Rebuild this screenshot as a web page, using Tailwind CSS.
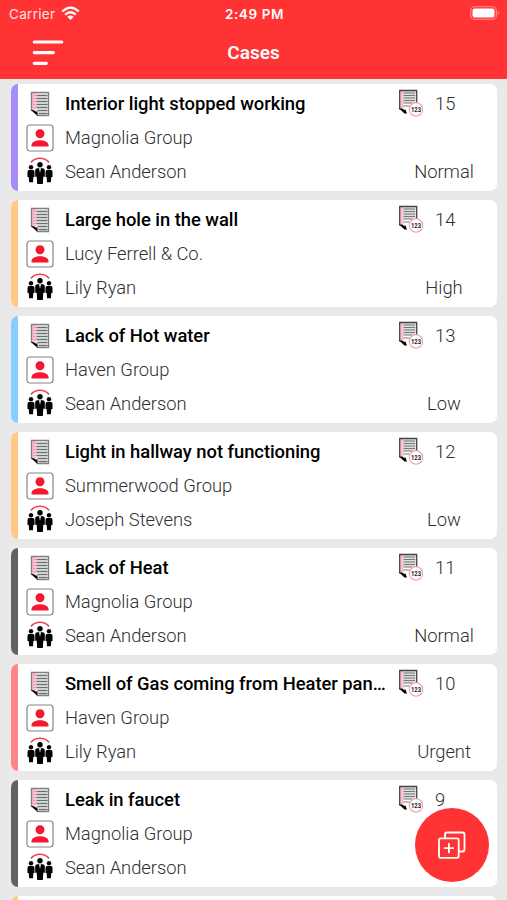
<!DOCTYPE html>
<html lang="en">
<head>
<meta charset="utf-8">
<title>Cases</title>
<script src="https://cdn.jsdelivr.net/npm/@tailwindcss/browser@4"></script>
</head>
<body class="bg-[#e9e9e9]">
<svg class="hidden">
  <symbol id="page" viewBox="0 0 20 26">
    <path d="M1 1h17.500v24H7L1 19z" fill="#f4f4f4"/>
    <path d="M2 1.500h4.500V19H2z" fill="#ffc0cf"/>
    <path d="M6.500 4.500h11M6.500 7.500h11M6.500 10.500h11M6.500 13.500h11M6.500 16.500h11M7.500 19.500h10M8.500 22.500h9" stroke="#6c6c6c" stroke-width="1.300"/>
    <path d="M3 4.500h2.500M3 7.500h2.500M3 10.500h2.500M3 13.500h2.500M3 16.500h2.500" stroke="#e59cab" stroke-width="1"/>
    <path d="M1.500 20V1.500h17v23H7" fill="none" stroke="#808080" stroke-width="1.400"/>
    <path d="M1 19l6.500 6V20.500Q5 21 4 19.200z" fill="#000"/>
  </symbol>
  <symbol id="person" viewBox="0 0 28 28">
    <rect x="1" y="1" width="26" height="26" rx="3" fill="#fff" stroke="#858585" stroke-width="1.200"/>
    <circle cx="14" cy="9.800" r="4.500" fill="#f3182f"/>
    <path d="M5.500 22.500v-1.200c0-3.300 4.500-5 8.500-5s8.500 1.700 8.500 5v1.200z" fill="#f3182f"/>
  </symbol>
  <symbol id="team" viewBox="0 0 28 28">
    <path d="M5 5.500C9-.2 19-.2 23 5.500" fill="none" stroke="#f0405a" stroke-width="1.500"/>
    <circle cx="14" cy="7.800" r="2.700"/>
    <circle cx="5" cy="10.300" r="2.200"/>
    <circle cx="23" cy="10.300" r="2.200"/>
    <path d="M11 11.200h6q1.800.3 1.800 2.200v6.300h-1.500l-.5 7.300h-5.600l-.5-7.300H9.200v-6.300q0-1.900 1.800-2.200z"/>
    <path d="M3 13h4q1.500.2 1.500 1.700V20H7.300L7 25.200H3.200L2.700 20H1.500v-5.300Q1.500 13.200 3 13zM21 13h4q1.500.2 1.500 1.700V20h-1.200l-.5 5.200H21l-.3-5.200h-1.200v-5.300q0-1.500 1.500-1.700z"/>
    <path d="M13 11.200h2l-1 4.500z" fill="#fff"/>
  </symbol>
  <symbol id="pagenum" viewBox="0 0 26 28">
    <path d="M1.500 1.500h17v22H7l-5.500-4z" fill="#fff"/>
    <path d="M2 2h3.500v18H2z" fill="#ffc0cf"/>
    <path d="M5.500 2H18v12H5.500z" fill="#ddd"/>
    <path d="M5.500 4h11.500M5.500 6.500h11.500M5.500 9h11.500M5.500 11.500h11.500M5.500 14h9M5.500 17h6" stroke="#777" stroke-width="1.100"/>
    <path d="M1.700 20.500V1.500h17V14" fill="none" stroke="#444" stroke-width="1.300"/>
    <path d="M1.100 19.500L6.500 24.500H9L7.500 20.500Q5 21 4 19.500z" fill="#000"/>
    <circle cx="18" cy="20.500" r="6.700" fill="#fff" stroke="#f0a0b0" stroke-width="1.100"/>
    <text x="18" y="22.800" text-anchor="middle" font-family="Roboto, sans-serif" font-size="6.500" font-weight="700" fill="#222" textLength="10" lengthAdjust="spacingAndGlyphs">123</text>
  </symbol>
</svg>
<div class="relative w-[507px] h-[900px] overflow-hidden bg-[#e9e9e9] font-['Roboto',sans-serif]">
  <header class="h-[79px] bg-[#ff3334] text-white">
    <div class="grid grid-cols-3 items-center h-7 pl-[9px] pr-[7px]">
      <div class="flex items-center gap-[6px] text-[13.500px] font-['Inter',sans-serif] text-white/85">
        <span class="tracking-[0.300px]">Carrier</span>
        <svg class="w-[19px] h-[15px] -mt-[2px]" viewBox="0 0 19 15" fill="none" stroke="#fff" stroke-width="2.300">
          <path d="M1.200 5.500Q9.500-2.300 17.800 5.500M4.200 8.700Q9.500 3.700 14.800 8.700"/>
          <path d="M9.500 14L6.300 10.800Q9.500 8 12.700 10.800z" fill="#fff" stroke="none"/>
        </svg>
      </div>
      <div class="text-center text-[13.500px] font-semibold font-['Inter',sans-serif] tracking-[0.600px]">2:49 PM</div>
      <svg class="justify-self-end w-[30px] h-[14px] -mt-[2px]" viewBox="0 0 30 14">
        <rect x=".8" y=".8" width="25.500" height="12.400" rx="3.800" fill="none" stroke="#fff" stroke-opacity=".45" stroke-width="1.100"/>
        <rect x="2.500" y="2.500" width="22" height="9" rx="2.200" fill="#fff"/>
        <path d="M27.700 4.800q2 2.200 0 4.400z" fill="#fff" fill-opacity=".5"/>
      </svg>
    </div>
    <div class="grid grid-cols-3 items-center h-[48px] px-8">
      <svg class="w-8 h-[27px]" viewBox="0 0 32 27" stroke="#fff" stroke-width="3.200" stroke-linecap="round">
        <path d="M2.300 3h27.400M2.300 13.600h19M2.300 24.300h12"/>
      </svg>
      <h1 class="text-center text-[19px] font-semibold leading-6 pt-px">Cases</h1>
    </div>
  </header>
  <main id="cases" class="flex flex-col gap-[9.500px] pt-[5px] pl-[11px] pr-[10px]"></main>
  <button aria-label="Add case" class="absolute left-[415px] top-[808px] w-[74px] h-[74px] rounded-full bg-[#ff3334] flex items-center justify-center">
    <svg class="w-7 h-7" viewBox="0 0 28 28" fill="none" stroke="#fff" stroke-width="1.800" stroke-linejoin="round" stroke-linecap="round">
      <path d="M7 6.200V3.500Q7 1.500 9 1.500h15.500q2 0 2 2v15q0 2-2 2h-2.300"/>
      <rect x="1" y="7.300" width="19.700" height="19.500" rx="1.700"/>
      <path d="M10.900 12.700v8.700M6.500 17.100h8.800"/>
    </svg>
  </button>
</div>
<template id="card">
  <article class="flex h-[106.500px] shrink-0 rounded-[7px] overflow-hidden bg-white text-[18.400px] font-light text-[#303030] tracking-[-0.040px]">
    <div data-stripe class="w-[7px] shrink-0"></div>
    <div class="grow pt-[2px] pl-2">
      <div class="flex items-center h-[34px]">
        <div class="w-7 flex justify-center"><svg class="w-5 h-[26px] mt-[2px]"><use href="#page"/></svg></div>
        <div data-title class="pt-px ml-[11px] w-[321px] font-medium text-black whitespace-nowrap"></div>
        <svg class="ml-[12px] w-[26px] h-7"><use href="#pagenum"/></svg>
        <div data-num class="pt-px ml-[11px]"></div>
      </div>
      <div class="flex items-center h-[34px]">
        <svg class="w-7 h-7 mt-[2px]"><use href="#person"/></svg>
        <div data-group class="pt-px ml-[11px]"></div>
      </div>
      <div class="flex items-center h-[34px]">
        <svg class="w-7 h-7"><use href="#team"/></svg>
        <div data-owner class="pt-px ml-[11px] grow"></div>
        <div data-priority class="pt-px w-[106px] text-center"></div>
      </div>
    </div>
  </article>
</template>
<script>
const cases = [
  ['Interior light stopped working', 'Magnolia Group', 'Sean Anderson', '15', 'Normal', '#a58cf8'],
  ['Large hole in the wall', 'Lucy Ferrell & Co.', 'Lily Ryan', '14', 'High', '#ffc985'],
  ['Lack of Hot water', 'Haven Group', 'Sean Anderson', '13', 'Low', '#86cfff'],
  ['Light in hallway not functioning', 'Summerwood Group', 'Joseph Stevens', '12', 'Low', '#ffc985'],
  ['Lack of Heat', 'Magnolia Group', 'Sean Anderson', '11', 'Normal', '#626262'],
  ['Smell of Gas coming from Heater pan…', 'Haven Group', 'Lily Ryan', '10', 'Urgent', '#ff8589'],
  ['Leak in faucet', 'Magnolia Group', 'Sean Anderson', '9', '', '#626262'],
  ['', '', '', '', '', '#ffc985']
];
const tpl = document.getElementById('card');
for (const [title, group, owner, num, priority, color] of cases) {
  const el = tpl.content.cloneNode(true);
  const fields = { title, group, owner, num, priority };
  for (const key in fields) el.querySelector('[data-' + key + ']').textContent = fields[key];
  el.querySelector('[data-stripe]').style.backgroundColor = color;
  document.getElementById('cases').append(el);
}
</script>
</body>
</html>
